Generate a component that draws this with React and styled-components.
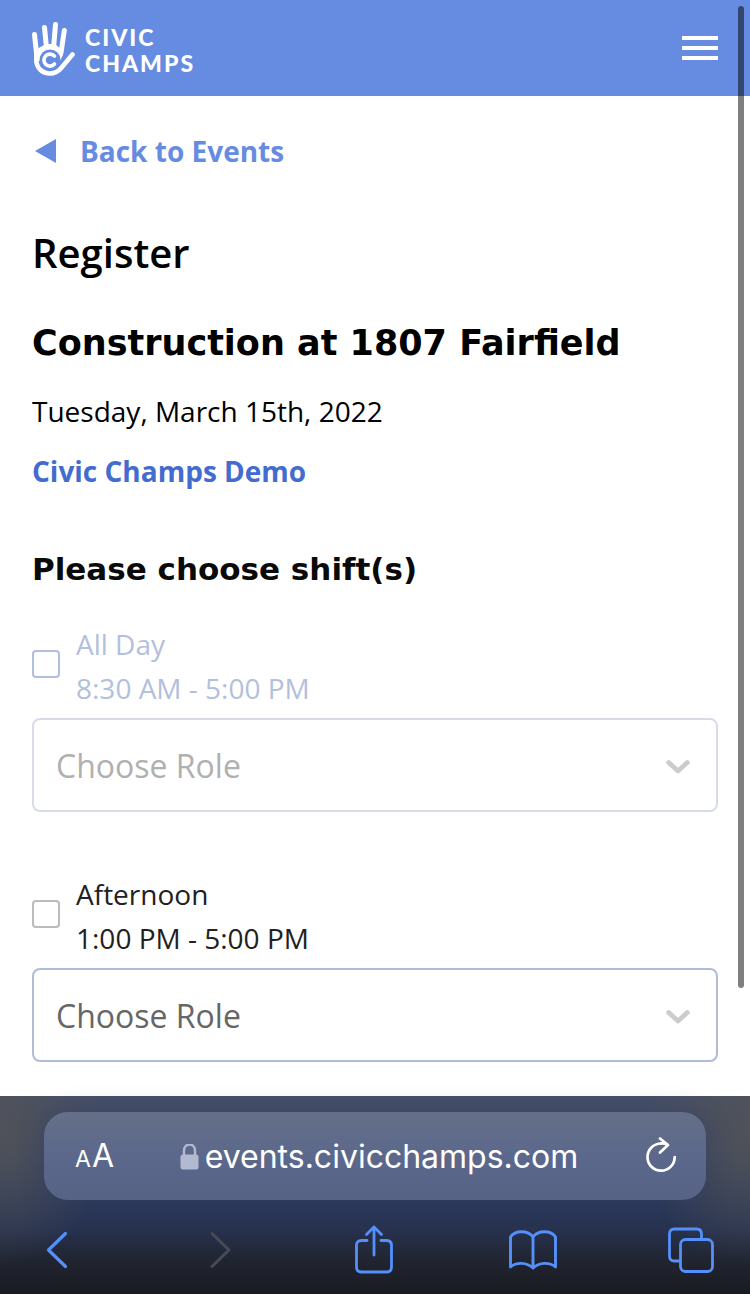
import React from "react";
import styled, { createGlobalStyle } from "styled-components";

const sans = `"Open Sans", "Noto Sans", sans-serif`;
const display = `"DejaVu Sans", Verdana, sans-serif`;
const logo = `Lato, "Open Sans", sans-serif`;
const system = `Inter, "Liberation Sans", sans-serif`;

const GlobalStyle = createGlobalStyle`
  *, *::before, *::after { box-sizing: border-box; }
  body { margin: 0; background: #fff; color: #000; font-family: ${sans}; }
  h1, h2, h3, p, fieldset, legend { margin: 0; padding: 0; border: 0; }
  button { border: 0; padding: 0; background: none; font: inherit; color: inherit; cursor: pointer; }
  svg { display: block; }
`;

const Page = styled.div`
  position: relative;
  min-height: 100vh;
  display: flex;
  flex-direction: column;
`;

const Header = styled.header`
  display: flex;
  align-items: center;
  justify-content: space-between;
  height: 96px;
  padding: 0 32px;
  background: #668ce1;
`;

const Brand = styled.a`
  display: flex;
  align-items: center;
  gap: 10px;
  color: #fff;
  text-decoration: none;
`;

const BrandName = styled.span`
  display: flex;
  flex-direction: column;
  padding-top: 4px;
  font: 900 23px/26px ${logo};
  letter-spacing: 2px;
`;

const MenuButton = styled.button`
  display: flex;
  flex-direction: column;
  gap: 6px;
`;

const MenuLine = styled.span`
  width: 36px;
  height: 4px;
  background: #fff;
`;

const Main = styled.main`
  flex: 1;
  display: flex;
  flex-direction: column;
  align-items: stretch;
  padding: 31px 32px 34px;
`;

const BackLink = styled.a`
  display: flex;
  align-items: center;
  gap: 24px;
  align-self: flex-start;
  padding-left: 3px;
  color: #668ce1;
  font-size: 28px;
  font-weight: 700;
  line-height: 48px;
  text-decoration: none;
`;

const PageTitle = styled.h1`
  margin-top: 50px;
  font-size: 40px;
  font-weight: 600;
  line-height: 56px;
`;

const EventTitle = styled.h2`
  margin-top: 38px;
  font: 700 35px/48px ${display};
`;

const EventDate = styled.p`
  margin-top: 24px;
  font-size: 28px;
  line-height: 40px;
`;

const OrgLink = styled.a`
  align-self: flex-start;
  margin-top: 20px;
  color: #446cce;
  font-size: 28px;
  font-weight: 700;
  line-height: 40px;
  text-decoration: none;
`;

const SectionTitle = styled.h3`
  margin-top: 54px;
  font: 700 31px/48px ${display};
  color: #0a0a0a;
`;

const ShiftList = styled.div`
  display: flex;
  flex-direction: column;
  gap: 60px;
  margin-top: 29px;
`;

const Shift = styled.fieldset`
  display: flex;
  flex-direction: column;
  gap: 8px;
  min-width: 0;
`;

const ShiftLabel = styled.label`
  display: flex;
  align-items: center;
  gap: 16px;
  color: ${(p) => (p.$disabled ? "#b2bfdd" : "#212121")};
  font-size: 28px;
  line-height: 44px;
`;

const ShiftText = styled.span`
  display: flex;
  flex-direction: column;
`;

const Checkbox = styled.input`
  appearance: none;
  width: 28px;
  height: 28px;
  margin: 0 0 4px;
  border: 2px solid ${(p) => (p.disabled ? "#b0bede" : "#bbb")};
  border-radius: 4px;
  background: #fff;
  &:checked { background: #668ce1; }
`;

const SelectBox = styled.div`
  position: relative;
`;

const RoleSelect = styled.select`
  appearance: none;
  display: block;
  width: 100%;
  height: 94px;
  padding: 0 72px 0 22px;
  border: 2px solid ${(p) => (p.disabled ? "#d8dcea" : "#aebcd8")};
  border-radius: 8px;
  background: #fff;
  color: ${(p) => (p.disabled ? "#b0b0b0" : "#666")};
  opacity: 1;
  font: 400 32px ${sans};
`;

const SelectArrow = styled.svg`
  position: absolute;
  right: 26px;
  top: 40px;
  pointer-events: none;
`;

const ScrollThumb = styled.div`
  position: absolute;
  top: 6px;
  right: 6px;
  bottom: 306px;
  width: 6px;
  border-radius: 3px;
  background: rgba(0, 0, 0, 0.5);
`;

const BrowserBar = styled.footer`
  background:
    radial-gradient(ellipse 110px 130px at 0 20%, rgba(84, 84, 84, 0.8), rgba(84, 84, 84, 0)),
    radial-gradient(ellipse 110px 130px at 100% 20%, rgba(84, 84, 84, 0.8), rgba(84, 84, 84, 0)),
    linear-gradient(#475069 0%, #3a4666 30%, #2c3858 56%, #283352 66%, #20242f 84%, #1a1b22 100%);
`;

const AddressRow = styled.div`
  padding: 16px 44px 0;
`;

const AddressField = styled.div`
  display: flex;
  align-items: center;
  justify-content: space-between;
  height: 88px;
  padding: 2px 28px 0 31px;
  border-radius: 24px;
  background: linear-gradient(#656f88, #5a678c 60%, #566383);
  box-shadow: 0 0 24px rgba(40, 55, 95, 0.35);
  color: #fff;
  font-family: ${system};
`;

const TextSizeButton = styled.button`
  display: flex;
  align-items: baseline;
  gap: 1px;
  font-size: 32px;
  line-height: 40px;
`;

const SmallLetter = styled.span`
  font-size: 23px;
`;

const Address = styled.span`
  display: flex;
  align-items: center;
  gap: 6px;
  font-size: 32px;
  line-height: 40px;
`;

const Toolbar = styled.nav`
  display: flex;
  justify-content: space-between;
  height: 94px;
  padding: 18px 27px 12px 25px;
`;

const ToolButton = styled.button`
  display: flex;
  align-items: center;
  justify-content: center;
  width: 64px;
  height: 64px;
  color: ${(p) => (p.disabled ? "#484b55" : "#5590fa")};
`;

const stroke = {
  fill: "none",
  stroke: "currentColor",
  strokeLinecap: "round",
  strokeLinejoin: "round",
};

function HandLogo() {
  return (
    <svg width="43" height="56" viewBox="32 20 43 56" aria-hidden="true">
      <path d="M35 50L46 44H55L62 50L63 55L60 61H36Z" fill="#fff" />
      <g fill="none" stroke="#fff" strokeLinecap="round" strokeWidth="5">
        <path d="M34.500 34.500L36.800 56" />
        <path d="M44.500 27.500L46.500 48" />
        <path d="M55.500 24.500L53.500 48" />
        <path d="M64.300 30.500L61 53" />
      </g>
      <circle cx="50" cy="60" r="10.500" fill="#668ce1" />
      <path
        d="M36.300 50V60C36.300 68 42.500 73.500 50 73.500C54.500 73.500 58 71.800 61 68.300L72.500 54.500"
        fill="none"
        stroke="#fff"
        strokeWidth="4.600"
        strokeLinecap="round"
      />
      <path d="M54.500 56.200A6 6 0 1 0 54.500 64" fill="none" stroke="#fff" strokeWidth="3.600" strokeLinecap="round" />
    </svg>
  );
}

function ShiftOption({ id, name, time, disabled }) {
  return (
    <Shift>
      <ShiftLabel htmlFor={id} $disabled={disabled}>
        <Checkbox type="checkbox" id={id} disabled={disabled} />
        <ShiftText>
          <span>{name}</span>
          <span>{time}</span>
        </ShiftText>
      </ShiftLabel>
      <SelectBox>
        <RoleSelect aria-label={`Role for ${name}`} disabled={disabled} defaultValue="">
          <option value="">Choose Role</option>
        </RoleSelect>
        <SelectArrow width="28" height="18" viewBox="0 0 28 18" aria-hidden="true">
          <path d="M4.700 4.500L14 13L23.300 4.500" fill="none" stroke="#ccc" strokeWidth="4.800" strokeLinecap="round" strokeLinejoin="round" />
        </SelectArrow>
      </SelectBox>
    </Shift>
  );
}

export default function App() {
  return (
    <Page>
      <GlobalStyle />
      <Header>
        <Brand href="#home">
          <HandLogo />
          <BrandName>
            <span>CIVIC</span>
            <span>CHAMPS</span>
          </BrandName>
        </Brand>
        <MenuButton type="button" aria-label="Menu">
          <MenuLine />
          <MenuLine />
          <MenuLine />
        </MenuButton>
      </Header>
      <Main>
        <BackLink href="#events">
          <svg width="21" height="24" viewBox="0 0 21 24" aria-hidden="true">
            <path d="M21 0V24L0 12Z" fill="currentColor" />
          </svg>
          Back to Events
        </BackLink>
        <PageTitle>Register</PageTitle>
        <EventTitle>Construction at 1807 Fairfield</EventTitle>
        <EventDate>Tuesday, March 15th, 2022</EventDate>
        <OrgLink href="#organization">Civic Champs Demo</OrgLink>
        <SectionTitle>Please choose shift(s)</SectionTitle>
        <ShiftList>
          <ShiftOption id="all-day" name="All Day" time="8:30 AM - 5:00 PM" disabled />
          <ShiftOption id="afternoon" name="Afternoon" time="1:00 PM - 5:00 PM" />
        </ShiftList>
      </Main>
      <BrowserBar>
        <AddressRow>
          <AddressField>
            <TextSizeButton type="button" aria-label="Text size">
              <SmallLetter>A</SmallLetter>A
            </TextSizeButton>
            <Address>
              <svg width="19" height="27" viewBox="0 1 19 27" aria-hidden="true">
                <path d="M4 12V7.500C4 -0.500 15 -0.500 15 7.500V12" fill="none" stroke="#b3b9d0" strokeWidth="2.400" />
                <rect x="0.500" y="11.500" width="18" height="15" rx="2.500" fill="#b3b9d0" />
              </svg>
              events.civicchamps.com
            </Address>
            <button type="button" aria-label="Reload">
              <svg width="34" height="40" viewBox="0 3 34 40" aria-hidden="true">
                <path d="M17 9.500A13.600 13.600 0 1 0 30.700 23" {...stroke} strokeWidth="2.700" />
                <path d="M17 9.500C20 9.300 22 9.800 24 11M16 4.500L24 11L16 18.500" {...stroke} strokeWidth="2.700" />
              </svg>
            </button>
          </AddressField>
        </AddressRow>
        <Toolbar aria-label="Browser">
          <ToolButton type="button" aria-label="Back">
            <svg width="22" height="38" viewBox="0 0 22 38" aria-hidden="true">
              <path d="M19.500 2.500L2.500 19L19.500 35.500" {...stroke} strokeWidth="3.200" />
            </svg>
          </ToolButton>
          <ToolButton type="button" aria-label="Forward" disabled>
            <svg width="32" height="38" viewBox="0 0 32 38" aria-hidden="true">
              <path d="M12 2.500L29 19L12 35.500" {...stroke} strokeWidth="3" />
            </svg>
          </ToolButton>
          <ToolButton type="button" aria-label="Share">
            <svg width="38" height="50" viewBox="0 1 38 50" aria-hidden="true">
              <path d="M12 16.500H6.500Q1.500 16.500 1.500 21.500V43Q1.500 48 6.500 48H31.500Q36.500 48 36.500 43V21.500Q36.500 16.500 31.500 16.500H26" {...stroke} strokeWidth="2.800" />
              <path d="M19 31V3M11.500 10.500L19 3L26.500 10.500" {...stroke} strokeWidth="2.800" />
            </svg>
          </ToolButton>
          <ToolButton type="button" aria-label="Bookmarks">
            <svg width="48" height="40" viewBox="0 0 48 40" aria-hidden="true">
              <path d="M24 7C19 0 6 0 1.500 7V37C7 32 18 32 24 38C30 32 41 32 46.500 37V7C42 0 29 0 24 7V37" {...stroke} strokeWidth="2.900" />
            </svg>
          </ToolButton>
          <ToolButton type="button" aria-label="Tabs">
            <svg width="46" height="46" viewBox="0 0 46 46" aria-hidden="true">
              <rect x="12.500" y="12.500" width="32" height="32" rx="5" {...stroke} strokeWidth="2.800" />
              <path d="M12 34H6.500Q1.500 34 1.500 29V7Q1.500 2 6.500 2H28.500Q33.500 2 33.500 7V12" {...stroke} strokeWidth="2.800" />
            </svg>
          </ToolButton>
        </Toolbar>
      </BrowserBar>
      <ScrollThumb />
    </Page>
  );
}
